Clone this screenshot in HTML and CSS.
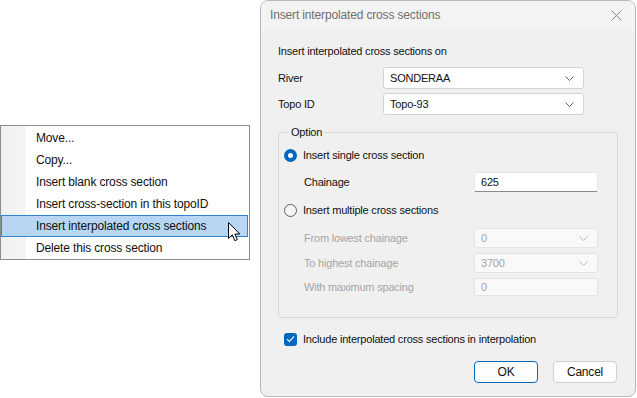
FILE: index.html
```html
<!DOCTYPE html>
<html>
<head>
<meta charset="utf-8">
<link rel="stylesheet" href="styles.css">
</head>
<body>
<div class="desktop">
  <div class="menu">
    <div class="menu-item">Move...</div>
    <div class="menu-item">Copy...</div>
    <div class="menu-item">Insert blank cross section</div>
    <div class="menu-item">Insert cross-section in this topoID</div>
    <div class="menu-item hot">Insert interpolated cross sections</div>
    <div class="menu-item">Delete this cross section</div>
  </div>
  <svg class="cursor" width="13" height="20" viewBox="0 0 13 20">
    <path d="M0.5 0.5 L0.5 16.5 L4.3 12.8 L6.8 18.7 L9.3 17.6 L6.9 12 L11.8 12 Z" fill="#fff" stroke="#000" stroke-width="1" stroke-linejoin="miter"/>
  </svg>

  <div class="dialog">
    <div class="titlebar">
      <span class="title">Insert interpolated cross sections</span>
      <svg class="close" width="11" height="11" viewBox="0 0 11 11">
        <path d="M0.5 0.5 L10.5 10.5 M10.5 0.5 L0.5 10.5" stroke="#8a8a8a" stroke-width="1"/>
      </svg>
    </div>
    <div class="content">
      <div class="intro">Insert interpolated cross sections on</div>
      <div class="field-row">
        <span class="label">River</span>
        <div class="combo"><span>SONDERAA</span><svg class="chev" width="9" height="5" viewBox="0 0 9 5"><path d="M0.5 0.5 L4.5 4.5 L8.5 0.5" fill="none" stroke="#606060"/></svg></div>
      </div>
      <div class="field-row second">
        <span class="label">Topo ID</span>
        <div class="combo"><span>Topo-93</span><svg class="chev" width="9" height="5" viewBox="0 0 9 5"><path d="M0.5 0.5 L4.5 4.5 L8.5 0.5" fill="none" stroke="#606060"/></svg></div>
      </div>

      <fieldset class="group">
        <legend>Option</legend>
        <div class="radio-row first">
          <span class="radio on"></span><span>Insert single cross section</span>
        </div>
        <div class="sub-row chain">
          <span class="sub-label">Chainage</span>
          <div class="textbox">625</div>
        </div>
        <div class="radio-row second">
          <span class="radio"></span><span>Insert multiple cross sections</span>
        </div>
        <div class="sub-row disabled from">
          <span class="sub-label">From lowest chainage</span>
          <div class="combo small off"><span>0</span><svg class="chev" width="9" height="5" viewBox="0 0 9 5"><path d="M0.5 0.5 L4.5 4.5 L8.5 0.5" fill="none" stroke="#b8b8b8"/></svg></div>
        </div>
        <div class="sub-row disabled to">
          <span class="sub-label">To highest chainage</span>
          <div class="combo small off"><span>3700</span><svg class="chev" width="9" height="5" viewBox="0 0 9 5"><path d="M0.5 0.5 L4.5 4.5 L8.5 0.5" fill="none" stroke="#b8b8b8"/></svg></div>
        </div>
        <div class="sub-row disabled spacing">
          <span class="sub-label">With maximum spacing</span>
          <div class="textbox off">0</div>
        </div>
      </fieldset>

      <div class="check-row">
        <span class="checkbox"><svg width="9" height="8" viewBox="0 0 9 8"><path d="M1 4.2 L3.4 6.5 L8 1.3" fill="none" stroke="#fff" stroke-width="1.1"/></svg></span>
        <span>Include interpolated cross sections in interpolation</span>
      </div>

      <div class="buttons">
        <div class="btn default">OK</div>
        <div class="btn">Cancel</div>
      </div>
    </div>
  </div>
</div>
</body>
</html>
```

FILE: styles.css
```css
html, body {
  margin: 0;
  padding: 0;
  background: #ffffff;
}
body {
  font-family: "Liberation Sans", Arial, sans-serif;
  font-size: 12px;
  letter-spacing: -0.15px;
  color: #1a1a1a;
}
.desktop {
  position: relative;
  width: 637px;
  height: 398px;
  overflow: hidden;
}

/* context menu */
.menu {
  position: absolute;
  left: 0;
  top: 125px;
  width: 250px;
  box-sizing: border-box;
  border: 1px solid #8c8c8c;
  padding: 1px 0 0 0;
  background: linear-gradient(to right, #f1f1f1 0, #f3f3f3 24px, #ffffff 25px);
}
.menu-item {
  height: 22px;
  line-height: 22px;
  padding-left: 35px;
  box-sizing: border-box;
  color: #111;
}
.menu-item.hot {
  background: #b8d6f3;
  border: 1px solid #2f86d8;
  line-height: 20px;
  padding-left: 34px;
  margin: 0 1px 0 0;
}
.cursor {
  position: absolute;
  left: 228px;
  top: 222px;
}

/* dialog */
.dialog {
  position: absolute;
  left: 260px;
  top: 0;
  width: 376px;
  height: 397px;
  box-sizing: border-box;
  border: 1px solid #b9b9b9;
  border-radius: 8px;
  background: #f0f0f0;
  overflow: hidden;
}
.titlebar {
  height: 30px;
  background: #f3f3f3;
  display: flex;
  align-items: center;
  justify-content: space-between;
  padding: 0 9px 2px 9px;
  box-sizing: border-box;
}
.title {
  color: #6f6f6f;
  font-size: 12px;
}
.close {
  margin-right: 4px;
}
.content {
  padding: 12px 17px 0 17px;
  font-size: 11px;
  letter-spacing: -0.2px;
  color: #111;
}
.intro {
  height: 16px;
  line-height: 16px;
}
.field-row {
  display: flex;
  align-items: center;
  height: 22px;
  margin-top: 8px;
}
.field-row.second {
  margin-top: 4px;
}
.label {
  width: 105px;
}
.combo {
  width: 201px;
  height: 22px;
  box-sizing: border-box;
  background: #ffffff;
  border: 1px solid #d3d3d3;
  border-radius: 3px;
  display: flex;
  align-items: center;
  justify-content: space-between;
  padding: 0 9px 0 6px;
  color: #111;
}
.combo.small {
  width: 124px;
  height: 20px;
}
.combo.off {
  background: #f9f9f9;
  border-color: #e3e3e3;
  color: #a3a3a3;
}

/* group box */
.group {
  margin: 9px 0 0 0;
  padding: 5px 5px 20px 5px;
  border: 1px solid #d8d8d8;
  border-radius: 3px;
  min-width: 0;
}
.group legend {
  padding: 0 2px;
  margin-left: 5px;
  line-height: 16px;
  height: 16px;
}
.radio-row {
  display: flex;
  align-items: center;
  height: 20px;
  gap: 6px;
}
.radio-row.second {
  margin-top: 8px;
}
.radio {
  width: 13px;
  height: 13px;
  box-sizing: border-box;
  border-radius: 50%;
  border: 1px solid #5e5e5e;
  background: #f6f6f6;
}
.radio.on {
  border: 4px solid #0067c0;
  background: #ffffff;
}
.sub-row {
  display: flex;
  align-items: center;
  height: 20px;
  padding-left: 20px;
}
.sub-row.chain { margin-top: 7px; }
.sub-row.from { margin-top: 8px; }
.sub-row.to { margin-top: 5px; }
.sub-row.spacing { margin-top: 4px; }
.sub-label {
  width: 170px;
}
.sub-row.disabled .sub-label {
  color: #a5a5a5;
}
.textbox {
  width: 124px;
  height: 20px;
  box-sizing: border-box;
  background: #ffffff;
  border: 1px solid #e6e6e6;
  border-bottom: 1px solid #8a8a8a;
  border-radius: 2px;
  padding-left: 6px;
  line-height: 18px;
  color: #111;
}
.textbox.off {
  height: 18px;
  line-height: 16px;
  background: #f9f9f9;
  border: 1px solid #e3e3e3;
  color: #a3a3a3;
}

.check-row {
  display: flex;
  align-items: center;
  height: 20px;
  margin-top: 11px;
  padding-left: 6px;
  gap: 6px;
}
.checkbox {
  width: 13px;
  height: 13px;
  border-radius: 3px;
  background: #0067c0;
  display: flex;
  align-items: center;
  justify-content: center;
}
.buttons {
  display: flex;
  justify-content: flex-end;
  gap: 15px;
  margin-top: 12px;
  padding-right: 1px;
}
.btn {
  width: 64px;
  height: 22px;
  box-sizing: border-box;
  border: 1px solid #d0d0d0;
  border-radius: 4px;
  background: #fdfdfd;
  text-align: center;
  line-height: 20px;
  color: #111;
  font-size: 12px;
}
.btn.default {
  border: 1px solid #0067c0;
  box-shadow: inset 0 0 0 1px #ffffff;
}
```
